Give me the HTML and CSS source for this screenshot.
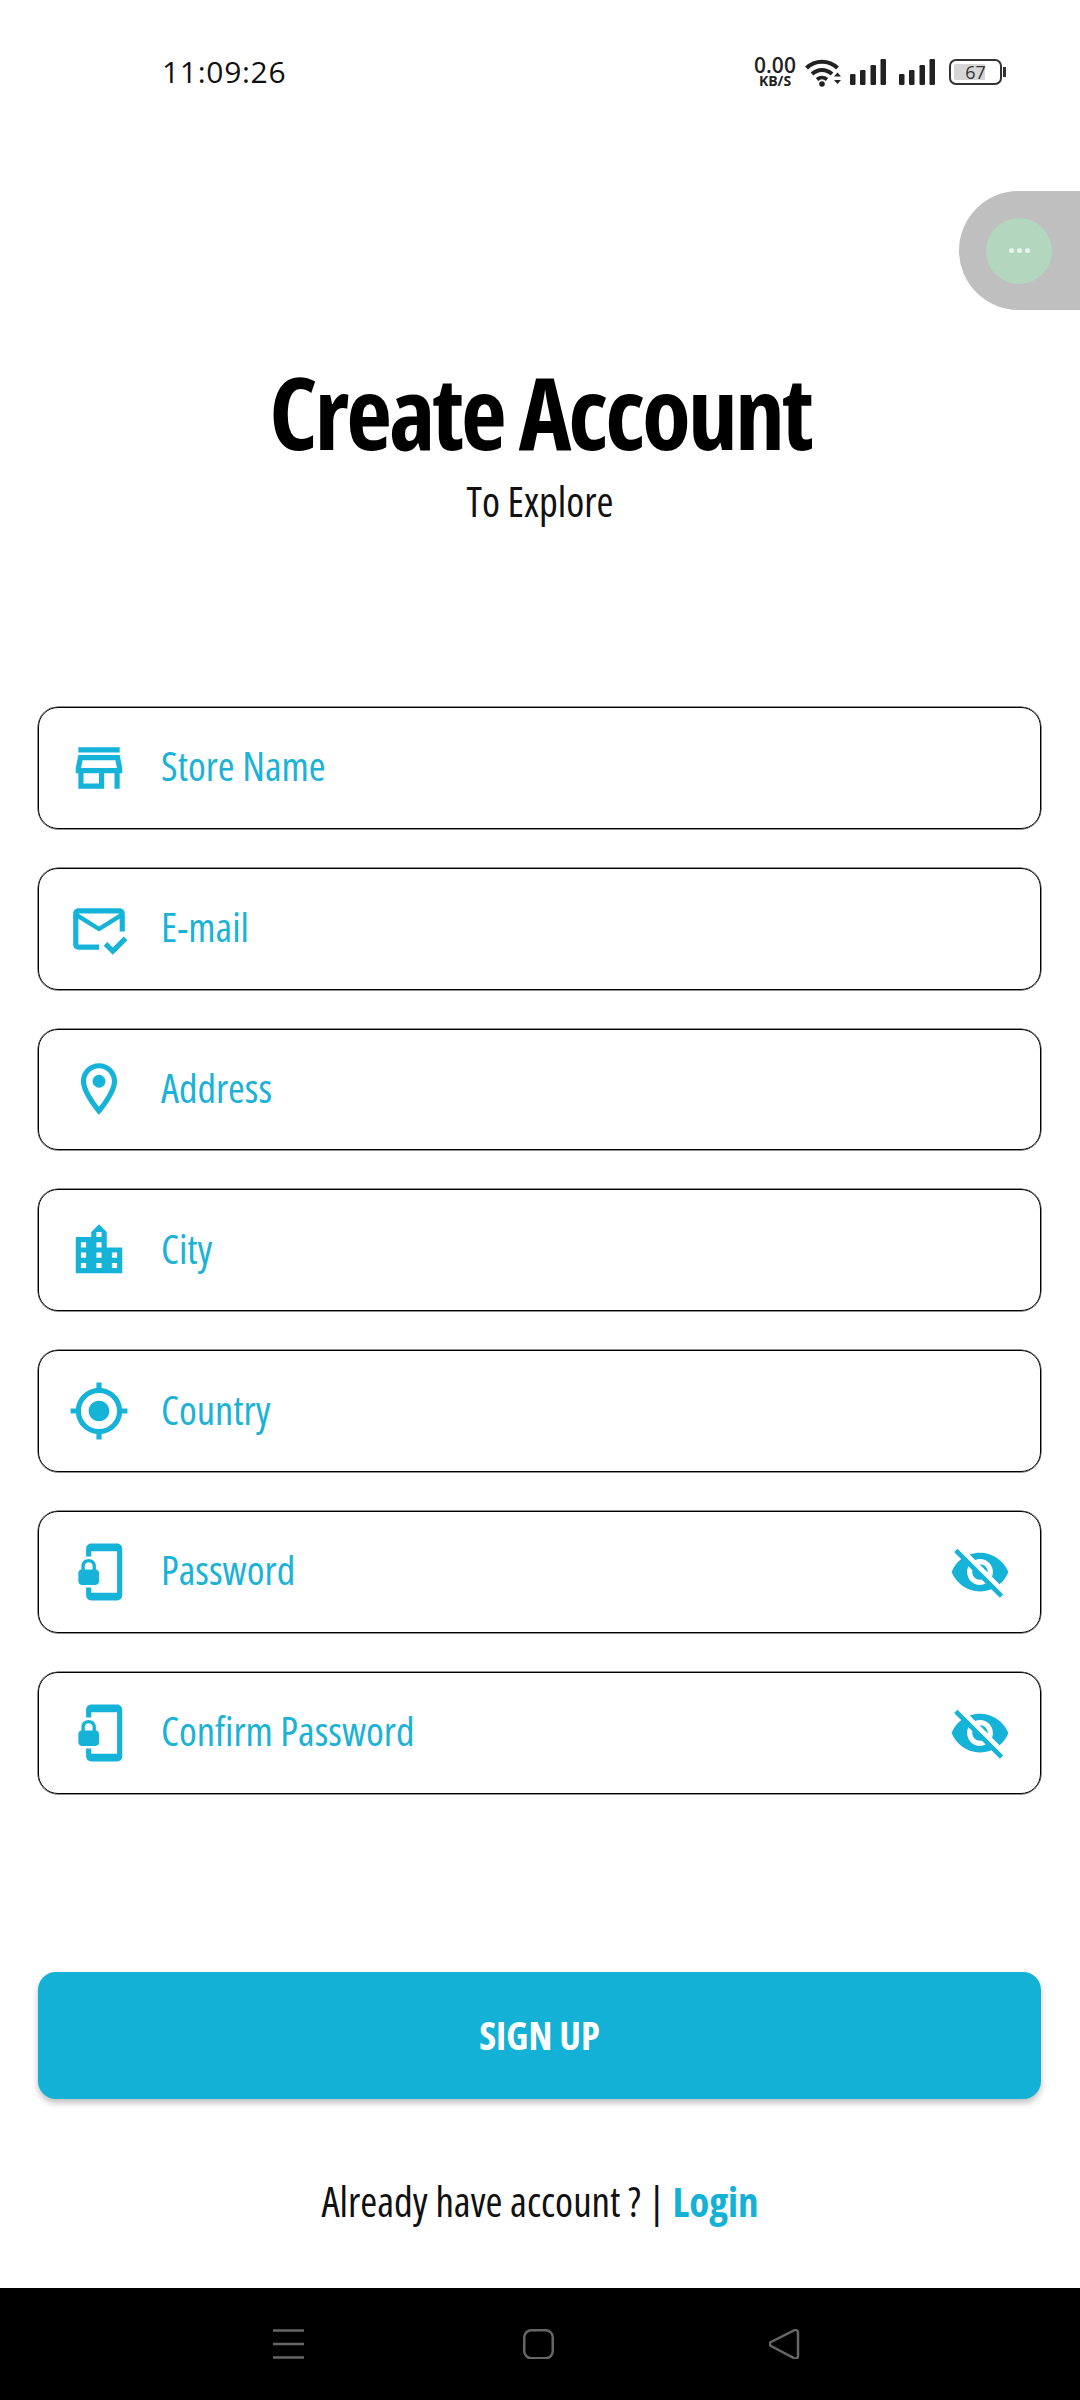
FILE: index.html
```html
<!DOCTYPE html>
<html lang="en">
<head>
<meta charset="utf-8">
<title>Create Account</title>
<link rel="stylesheet" href="styles.css">
</head>
<body>
<div class="page">
  <header class="status">
    <span class="time">11:09:26</span>
    <div class="status-right">
      <div class="net"><span class="net-val">0.00</span><span class="net-unit">KB/S</span></div>
      <svg class="wifi" viewBox="0 0 37 29"><path d="M1.500 10C10 1.500 24 1.500 32.500 10" fill="none" stroke="#222" stroke-width="4"/><path d="M7 16C13 10.500 21 10.500 27 16" fill="none" stroke="#222" stroke-width="4"/><path d="M12 21.500C15 19 19 19 22 21.500" fill="none" stroke="#222" stroke-width="3.600"/><circle cx="17" cy="26" r="2.800" fill="#222"/><path d="M29 18.500l3.500-4 3.500 4zM29 22l3.500 4 3.500-4z" fill="#222"/></svg>
      <svg class="signal" viewBox="0 0 36 26"><rect x="0" y="15" width="5.500" height="11" rx="1.200"/><rect x="10" y="11" width="5.500" height="15" rx="1.200"/><rect x="20.500" y="6" width="5.500" height="20" rx="1.200"/><rect x="30.500" y="0" width="5.500" height="26" rx="1.200"/></svg>
      <svg class="signal" viewBox="0 0 36 26"><rect x="0" y="15" width="5.500" height="11" rx="1.200"/><rect x="10" y="11" width="5.500" height="15" rx="1.200"/><rect x="20.500" y="6" width="5.500" height="20" rx="1.200"/><rect x="30.500" y="0" width="5.500" height="26" rx="1.200"/></svg>
      <div class="battery"><div class="battery-body"><div class="battery-fill"></div><span class="battery-num">67</span></div><div class="battery-nub"></div></div>
    </div>
  </header>

  <div class="float-pill"><div class="float-dot"><i></i><i></i><i></i></div></div>

  <section class="hero">
    <h1 class="title">Create Account</h1>
    <p class="subtitle">To Explore</p>
  </section>

  <form class="form">
    <div class="field">
      <svg class="icon" viewBox="0 0 24 24"><path d="M18.360 9l.6 3H5.040l.6-3h12.720M20 4H4v2h16V4zm0 3H4l-1 5v2h1v6h10v-6h4v6h2v-6h1v-2l-1-5zM6 18v-4h6v4H6z"/></svg>
      <span class="label">Store Name</span>
    </div>
    <div class="field">
      <svg class="icon" viewBox="0 0 24 24"><path d="M12 18H4V8l8 5 8-5v5h2V6c0-1.100-.9-2-2-2H4c-1.100 0-1.990.9-1.990 2L2 18c0 1.100.9 2 2 2h8v-2zM20 6l-8 5-8-5h16zM17.340 22l-3.540-3.540 1.410-1.410 2.120 2.120 4.240-4.240L23 16.340 17.340 22z"/></svg>
      <span class="label">E-mail</span>
    </div>
    <div class="field">
      <svg class="icon" viewBox="0 0 24 24"><path d="M12 2C8.130 2 5 5.130 5 9c0 5.250 7 13 7 13s7-7.750 7-13c0-3.870-3.130-7-7-7zM7 9c0-2.760 2.240-5 5-5s5 2.240 5 5c0 2.880-2.880 7.190-5 9.880C9.920 16.210 7 11.850 7 9z"/><circle cx="12" cy="9" r="2.500"/></svg>
      <span class="label">Address</span>
    </div>
    <div class="field">
      <svg class="icon" viewBox="0 0 24 24"><path d="M15 11V5l-3-3-3 3v2H3v14h18V11h-6zm-8 8H5v-2h2v2zm0-4H5v-2h2v2zm0-4H5V9h2v2zm6 8h-2v-2h2v2zm0-4h-2v-2h2v2zm0-4h-2V9h2v2zm0-4h-2V5h2v2zm6 12h-2v-2h2v2zm0-4h-2v-2h2v2z"/></svg>
      <span class="label">City</span>
    </div>
    <div class="field">
      <svg class="icon" viewBox="0 0 24 24"><path d="M12 8c-2.210 0-4 1.790-4 4s1.790 4 4 4 4-1.790 4-4-1.790-4-4-4zm8.940 3c-.46-4.170-3.770-7.480-7.940-7.940V1h-2v2.060C6.830 3.520 3.520 6.830 3.060 11H1v2h2.060c.46 4.170 3.770 7.480 7.940 7.940V23h2v-2.060c4.170-.46 7.480-3.770 7.940-7.940H23v-2h-2.060zM12 19c-3.870 0-7-3.130-7-7s3.130-7 7-7 7 3.130 7 7-3.130 7-7 7z"/></svg>
      <span class="label">Country</span>
    </div>
    <div class="field">
      <svg class="icon" viewBox="0 0 24 24"><path d="M19 1H9c-1.100 0-2 .9-2 2v3h2V4h10v16H9v-2H7v3c0 1.100.9 2 2 2h10c1.100 0 2-.9 2-2V3c0-1.100-.9-2-2-2zm-8.200 10V9.500C10.800 8.100 9.400 7 8 7S5.200 8.100 5.200 9.500V11c-.6 0-1.200.6-1.200 1.200v3.500c0 .7.6 1.300 1.200 1.300h5.500c.7 0 1.300-.6 1.300-1.200v-3.500c0-.7-.6-1.300-1.200-1.300zm-1.300 0h-3V9.500c0-.8.7-1.300 1.500-1.300s1.500.5 1.500 1.300V11z"/></svg>
      <span class="label">Password</span>
      <svg class="eye" viewBox="0 0 24 24"><path d="M12 7c2.760 0 5 2.240 5 5 0 .65-.13 1.260-.36 1.830l2.920 2.920c1.510-1.260 2.700-2.890 3.430-4.750-1.730-4.390-6-7.500-11-7.500-1.400 0-2.740.25-3.980.7l2.160 2.160C10.740 7.130 11.350 7 12 7zM2 4.270l2.280 2.280.46.46C3.080 8.300 1.780 10.020 1 12c1.730 4.390 6 7.500 11 7.500 1.550 0 3.030-.3 4.380-.84l.42.42L19.730 22 21 20.730 3.270 3 2 4.270zM7.530 9.800l1.550 1.550c-.05.21-.08.43-.08.65 0 1.660 1.340 3 3 3 .22 0 .44-.03.65-.08l1.550 1.550c-.67.33-1.410.53-2.200.53-2.760 0-5-2.240-5-5 0-.79.2-1.530.53-2.200zm4.310-.78l3.150 3.150.02-.16c0-1.660-1.340-3-3-3l-.17.01z"/></svg>
    </div>
    <div class="field">
      <svg class="icon" viewBox="0 0 24 24"><path d="M19 1H9c-1.100 0-2 .9-2 2v3h2V4h10v16H9v-2H7v3c0 1.100.9 2 2 2h10c1.100 0 2-.9 2-2V3c0-1.100-.9-2-2-2zm-8.200 10V9.500C10.800 8.100 9.400 7 8 7S5.200 8.100 5.200 9.500V11c-.6 0-1.200.6-1.200 1.200v3.500c0 .7.6 1.300 1.200 1.300h5.500c.7 0 1.300-.6 1.300-1.200v-3.500c0-.7-.6-1.300-1.200-1.300zm-1.300 0h-3V9.500c0-.8.7-1.300 1.500-1.300s1.500.5 1.500 1.300V11z"/></svg>
      <span class="label">Confirm Password</span>
      <svg class="eye" viewBox="0 0 24 24"><path d="M12 7c2.760 0 5 2.240 5 5 0 .65-.13 1.260-.36 1.830l2.920 2.920c1.510-1.260 2.700-2.890 3.430-4.750-1.730-4.390-6-7.500-11-7.500-1.400 0-2.740.25-3.980.7l2.160 2.160C10.740 7.130 11.350 7 12 7zM2 4.270l2.280 2.280.46.46C3.080 8.300 1.780 10.020 1 12c1.730 4.390 6 7.500 11 7.500 1.550 0 3.030-.3 4.380-.84l.42.42L19.730 22 21 20.730 3.270 3 2 4.270zM7.530 9.800l1.550 1.550c-.05.21-.08.43-.08.65 0 1.660 1.340 3 3 3 .22 0 .44-.03.65-.08l1.550 1.550c-.67.33-1.410.53-2.200.53-2.760 0-5-2.240-5-5 0-.79.2-1.530.53-2.200zm4.310-.78l3.150 3.150.02-.16c0-1.660-1.340-3-3-3l-.17.01z"/></svg>
    </div>
  </form>

  <div class="action"><button class="signup" type="button">SIGN UP</button></div>

  <p class="foot">Already have account ? | <a class="login">Login</a></p>

  <nav class="navbar">
    <svg class="nav-menu" viewBox="0 0 31 30"><path d="M0 1.500h31M0 15h31M0 28.500h31" stroke="#666" stroke-width="2.600" fill="none"/></svg>
    <svg class="nav-home" viewBox="0 0 31 30"><rect x="1.250" y="1.250" width="28.500" height="28" rx="7" fill="none" stroke="#666" stroke-width="2.500"/></svg>
    <svg class="nav-back" viewBox="0 0 31 30"><path d="M2 13L25 1.300c2-.9 4 0 4 2.200v23.500c0 2.200-2 3.100-4 2.200L2 17c-1.600-.9-1.600-3.100 0-4z" fill="none" stroke="#666" stroke-width="2.500"/></svg>
  </nav>
</div>
</body>
</html>
```
FILE: styles.css
```css
* { box-sizing: border-box; }
html, body { margin: 0; padding: 0; background: #fff; }
body { font-family: "Open Sans", "Liberation Sans", sans-serif; font-stretch: 75%; }
.page { position: relative; width: 1080px; height: 2400px; display: flex; flex-direction: column; overflow: hidden; background: #fff; }

.status { height: 144px; padding: 52px 74px 0 162px; display: flex; justify-content: space-between; align-items: flex-start; font-stretch: 100%; }
.time { font-family: "Open Sans", sans-serif; font-size: 30px; line-height: 40px; color: #111; letter-spacing: .7px; }
.status-right { display: flex; align-items: center; height: 40px; }
.net { display: flex; flex-direction: column; align-items: center; width: 42px; font-family: "Open Sans", sans-serif; font-weight: 600; color: #222; margin-right: 9px; }
.net-val { font-size: 21px; line-height: 17px; }
.net-unit { font-size: 14px; line-height: 13px; font-weight: 700; }
.wifi { width: 37px; height: 29px; margin-right: 8px; }
.signal { width: 36px; height: 26px; margin-right: 13px; fill: #222; }
.signal + .battery { margin-left: 1px; }
.battery { display: flex; align-items: center; }
.battery-body { position: relative; width: 53px; height: 26px; border: 2px solid #333; border-radius: 7px; display: flex; align-items: center; justify-content: center; }
.battery-fill { position: absolute; left: 3px; top: 3px; bottom: 3px; width: 31px; background: #d6d6d6; border-radius: 2px 0 0 2px; }
.battery-num { position: relative; font-family: "Open Sans", sans-serif; font-size: 18px; line-height: 20px; color: #333; }
.battery-nub { width: 3px; height: 10px; background: #333; margin-left: 1px; }

.float-pill { position: absolute; left: 959px; top: 191px; width: 121px; height: 119px; background: #bfbfbf; border-radius: 60px 0 0 60px; padding-left: 27px; display: flex; align-items: center; }
.float-dot { width: 66px; height: 66px; border-radius: 50%; background: #b3d6be; display: flex; align-items: center; justify-content: center; gap: 3px; }
.float-dot i { width: 5px; height: 5px; border-radius: 50%; background: #e8f3eb; }

.hero { height: 563px; padding-top: 212px; text-align: center; }
.title { margin: 0; font-size: 100px; line-height: 110px; font-weight: 700; letter-spacing: -3px; color: #000; }
.subtitle { margin: 12px 0 0; font-size: 41px; line-height: 46px; color: #111; }

.form { display: flex; flex-direction: column; gap: 39px; padding: 0 39px 0 38px; }
.field { height: 121.8px; border: 1px solid #000; border-radius: 20px; box-shadow: 0 0 0 .5px #222; display: flex; align-items: center; padding-left: 29px; padding-right: 29px; }
.icon { width: 62px; height: 62px; fill: #16b3d9; flex: none; }
.label { margin-left: 31px; padding-bottom: 4px; font-size: 40.500px; color: #1ab2d6; flex: 1; }
.eye { width: 62px; height: 62px; fill: #16b3d9; flex: none; }

.action { padding: 178px 39px 0 38px; }
.signup { width: 100%; height: 127px; border: 0; border-radius: 18px; background: #14b1d7; color: #fff; font-family: inherit; font-stretch: inherit; font-size: 38.500px; font-weight: 700; box-shadow: 0 4px 6px rgba(0,0,0,.25); }

.foot { margin: 79px 0 0; text-align: center; font-size: 41px; line-height: 46px; color: #111; }
.login { color: #14b1d7; font-weight: 700; }

.navbar { position: absolute; left: 0; right: 0; bottom: 0; height: 112px; background: #000; }
.nav-menu, .nav-home, .nav-back { position: absolute; top: 41px; width: 31px; height: 30px; }
.nav-menu { left: 273px; }
.nav-home { left: 523px; }
.nav-back { left: 769px; }
```
